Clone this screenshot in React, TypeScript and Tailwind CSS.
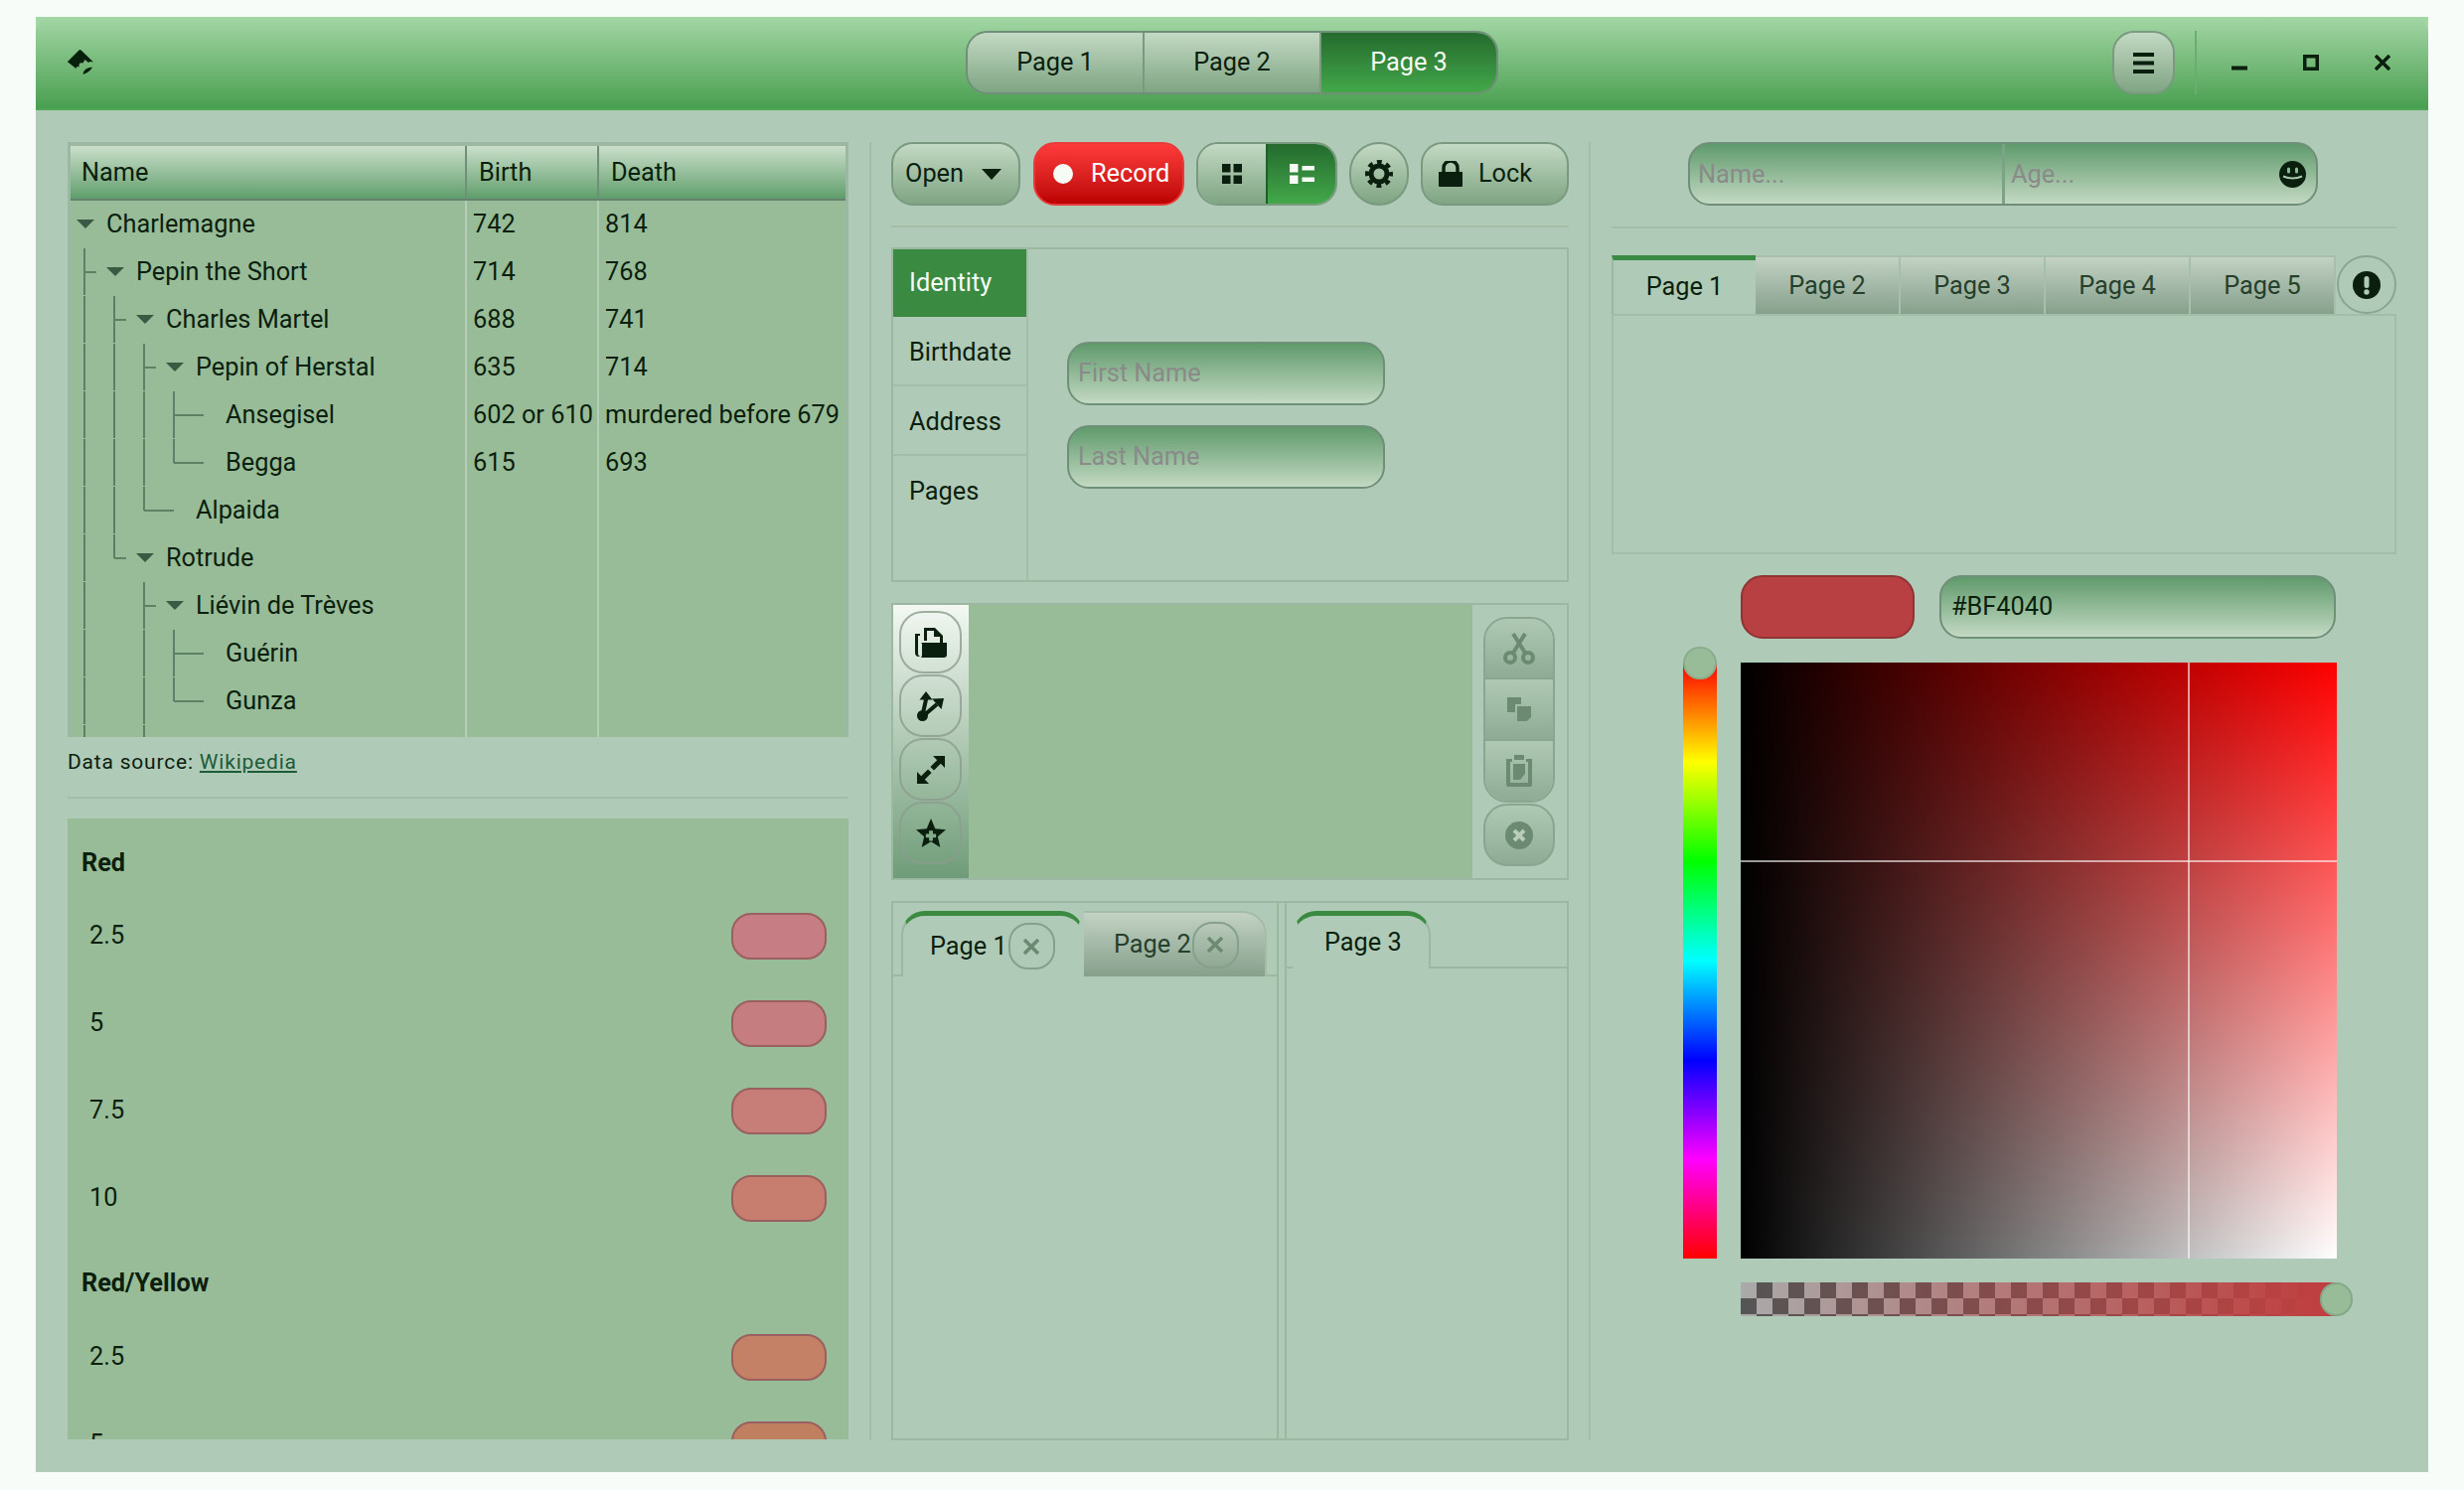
import React from "react";

const INK = "#0b1f0e";

type Guide = "v" | "t" | "l" | "T" | "L" | "_";
const rows: { g: Guide[]; exp?: boolean; name: string; b?: string; d?: string }[] = [
  { g: [], exp: true, name: "Charlemagne", b: "742", d: "814" },
  { g: ["t"], exp: true, name: "Pepin the Short", b: "714", d: "768" },
  { g: ["v", "t"], exp: true, name: "Charles Martel", b: "688", d: "741" },
  { g: ["v", "v", "t"], exp: true, name: "Pepin of Herstal", b: "635", d: "714" },
  { g: ["v", "v", "v", "T"], name: "Ansegisel", b: "602 or 610", d: "murdered before 679" },
  { g: ["v", "v", "v", "L"], name: "Begga", b: "615", d: "693" },
  { g: ["v", "v", "L"], name: "Alpaida" },
  { g: ["v", "l"], exp: true, name: "Rotrude" },
  { g: ["v", "_", "t"], exp: true, name: "Liévin de Trèves" },
  { g: ["v", "_", "v", "T"], name: "Guérin" },
  { g: ["v", "_", "v", "L"], name: "Gunza" },
  { g: ["v", "_", "v"], name: "" },
];

function GuideCell({ k }: { k: Guide }) {
  const c = "#5d8165";
  const long = k === "T" || k === "L";
  const last = k === "l" || k === "L";
  return (
    <svg width="30" height="48" className="shrink-0 overflow-visible">
      {k !== "_" && <rect x="7" y="0" width="2" height={last ? 24 : 47} fill={c} />}
      {k !== "v" && k !== "_" && <rect x="8" y="23" width={long ? 30 : 12} height="2" fill={c} />}
    </svg>
  );
}

function Arrow() {
  return (
    <svg width="30" height="10" viewBox="0 0 30 10" className="shrink-0">
      <path d="M0 0h18l-9 9z" fill="#3b5a44" />
    </svg>
  );
}

function TreeTable() {
  return (
    <div className="flex h-[599px] flex-col border-x-[3px] border-t-[4px] border-b-0 border-[#9db8a2] bg-[#99bc98]">
      <div className="flex h-[55px] shrink-0 border-b-2 border-[#66816c] bg-gradient-to-b from-[#cbdfcb] to-[#5f9e6c]">
        <div className="flex w-[399px] items-center border-r-2 border-[#6f8f78] pl-[11px]">Name</div>
        <div className="flex w-[133px] items-center border-r-2 border-[#6f8f78] pl-[12px]">Birth</div>
        <div className="flex flex-1 items-center pl-[12px]">Death</div>
      </div>
      <div className="flex-1 overflow-hidden">
        {rows.map((r, i) => (
          <div key={i} className="flex h-[48px]">
            <div className="flex w-[399px] shrink-0 items-center border-r-2 border-[#b5ceb8] pl-[6px]">
              {r.g.map((k, j) => (
                <GuideCell key={j} k={k} />
              ))}
              {r.exp ? <Arrow /> : <div className="w-[30px] shrink-0" />}
              <span>{r.name}</span>
            </div>
            <div className="flex w-[133px] shrink-0 items-center whitespace-nowrap border-r-2 border-[#b5ceb8] pl-[6px]">{r.b}</div>
            <div className="flex flex-1 items-center whitespace-nowrap pl-[6px]">{r.d}</div>
          </div>
        ))}
      </div>
    </div>
  );
}

function Swatch({ label, color }: { label: string; color: string }) {
  return (
    <div className="flex h-[88px] shrink-0 items-center justify-between pl-[22px] pr-[22px]">
      <span>{label}</span>
      <div className="h-[47px] w-[96px] rounded-[20px] border-2 border-[#9a5f5f]" style={{ background: color }} />
    </div>
  );
}

function Legend() {
  return (
    <div className="flex h-[625px] flex-col overflow-hidden bg-[#99bc98] pt-[22px]">
      <div className="h-[46px] shrink-0 pl-[14px] font-bold leading-[46px]">Red</div>
      <div className="mt-[6px]">
        <Swatch label="2.5" color="#c67d84" />
        <Swatch label="5" color="#c67d80" />
        <Swatch label="7.5" color="#c77e78" />
        <Swatch label="10" color="#c77e6e" />
      </div>
      <div className="mt-[19px] h-[46px] shrink-0 pl-[14px] font-bold leading-[46px]">Red/Yellow</div>
      <div className="mt-[7px]">
        <Swatch label="2.5" color="#c58165" />
        <Swatch label="5" color="#c08060" />
      </div>
    </div>
  );
}

const btn = "flex h-[64px] items-center border-2 border-[#7a9a80] bg-gradient-to-b from-[#c3d9c3] to-[#7fa583]";

function ToolbarRow() {
  return (
    <div className="flex h-[64px]">
      <div className={`${btn} w-[130px] rounded-[22px] pl-[12px]`}>
        <span>Open</span>
        <svg width="20" height="11" viewBox="0 0 20 11" className="ml-[18px]">
          <path d="M0 0h20l-10 11z" fill={INK} />
        </svg>
      </div>
      <div className="ml-[13px] flex h-[64px] w-[152px] items-center rounded-[22px] border-2 border-[#e93a3a] bg-gradient-to-b from-[#ff3a3a] to-[#bb0000] pl-[18px] text-white">
        <div className="h-[20px] w-[20px] rounded-full bg-[#f6fbf6]" />
        <span className="ml-[18px]">Record</span>
      </div>
      <div className="ml-[12px] flex h-[64px] w-[142px] overflow-hidden rounded-[22px] border-2 border-[#7a9a80]">
        <div className="flex w-[68px] items-center justify-center bg-gradient-to-b from-[#c3d9c3] to-[#7fa583]">
          <svg width="20" height="20" viewBox="0 0 20 20" fill={INK}>
            <rect width="8.5" height="8.5" />
            <rect x="11.5" width="8.5" height="8.5" />
            <rect y="11.5" width="8.5" height="8.5" />
            <rect x="11.5" y="11.5" width="8.5" height="8.5" />
          </svg>
        </div>
        <div className="flex flex-1 items-center justify-center border-l-2 border-[#1f5f28] bg-gradient-to-b from-[#256b2e] to-[#43a84a]">
          <svg width="25" height="20" viewBox="0 0 25 20" fill="#f6fbf6">
            <rect width="8.5" height="8.5" />
            <rect x="12.5" y="2" width="12.5" height="4.5" />
            <rect y="11.5" width="8.5" height="8.5" />
            <rect x="12.5" y="13.5" width="12.5" height="4.5" />
          </svg>
        </div>
      </div>
      <div className={`${btn} ml-[12px] w-[60px] justify-center rounded-full`}>
        <svg width="28" height="28" viewBox="0 0 28 28" fill="none" stroke={INK}>
          <circle cx="14" cy="14" r="8" strokeWidth="5" />
          <circle cx="14" cy="14" r="12" strokeWidth="4" strokeDasharray="4.9 4.52" strokeDashoffset="2.45" />
        </svg>
      </div>
      <div className={`${btn} ml-[12px] w-[149px] rounded-[22px] pl-[16px]`}>
        <svg width="24" height="26" viewBox="0 0 24 26" fill={INK}>
          <path d="M0 11h24v14a1 1 0 0 1-1 1H1a1 1 0 0 1-1-1z" />
          <path d="M5 12V7a7 7 0 0 1 14 0v5" fill="none" stroke={INK} strokeWidth="3.4" />
        </svg>
        <span className="ml-[16px]">Lock</span>
      </div>
    </div>
  );
}

const inputCls =
  "flex h-[64px] items-center border-2 border-[#6f8f78] bg-gradient-to-b from-[#5f9a6c] to-[#c3d9c3]";

function SidePanel() {
  const items = ["Birthdate", "Address"];
  return (
    <div className="mt-[20px] flex h-[337px] border-2 border-[#9db8a2]">
      <div className="flex w-[136px] shrink-0 flex-col border-r-2 border-[#a3bda8]">
        <div className="flex h-[68px] items-center bg-[#3a8a42] pl-[16px] text-[#f6fbf6]">Identity</div>
        {items.map((t) => (
          <div key={t} className="flex h-[70px] items-center border-b-2 border-[#a3bda8] pl-[16px] pt-[4px]">
            {t}
          </div>
        ))}
        <div className="flex h-[70px] items-center pl-[16px] pt-[2px]">Pages</div>
      </div>
      <div className="flex flex-1 flex-col justify-center gap-[20px] pl-[39px]">
        <div className={`${inputCls} w-[320px] rounded-[22px] pl-[9px] text-[#8a8a8a]`}>First Name</div>
        <div className={`${inputCls} w-[320px] rounded-[22px] pl-[9px] text-[#8a8a8a]`}>Last Name</div>
      </div>
    </div>
  );
}

const toolBtn = "flex h-[63px] w-[63px] items-center justify-center rounded-[24px] border-2 border-[#8c9c8f]/80";

function Toolbars() {
  const dis = "#6c8a72";
  return (
    <div className="mt-[21px] flex h-[279px] border-2 border-[#9db8a2]">
      <div className="flex w-[76px] shrink-0 flex-col gap-[1px] bg-gradient-to-b from-[#f3f8f3] to-[#6f9c78] pl-[6px] pt-[6px]">
        <div className={toolBtn}>
          <svg width="32" height="30" viewBox="0 0 32 30" fill={INK}>
            <path d="M9 0h11l8 8v8h-3V9h-6V3H12v10H9z" />
            <path d="M0 6h5v2H3v18q0 2 2 3H4q-4 0-4-4z" />
            <path d="M6 15h26v12q0 3-3 3H6q1-1 1-3V16z" />
          </svg>
        </div>
        <div className={toolBtn}>
          <svg width="27" height="30" viewBox="0 0 27 30" fill={INK}>
            <circle cx="5.500" cy="24.500" r="5.500" />
            <path d="M5.500 24 9.500 6" stroke={INK} strokeWidth="4" />
            <path d="M9 0 2.500 8.500h13z" />
            <path d="M6 25 20 13" stroke={INK} strokeWidth="4" />
            <path d="M27 7 15 7.500 24.500 18z" />
          </svg>
        </div>
        <div className={toolBtn}>
          <svg width="28" height="28" viewBox="0 0 28 28" fill={INK}>
            <path d="M16 0h12v12l-4.2-4.2-6.8 6.8-3.6-3.6 6.8-6.8z" />
            <path d="M0 28V16l4.2 4.2 6.8-6.8 3.6 3.6-6.8 6.8L12 28z" />
          </svg>
        </div>
        <div className={toolBtn}>
          <svg width="30" height="30" viewBox="0 0 28 28" fill={INK} fillRule="evenodd">
            <path d="M14 0l4 9.500 10 .9-7.600 6.600 2.300 10.100L14 21.700 5.300 27.100 7.600 17 0 10.400l10-.9zM12.200 11.500v3h-3V18h3v3h3.600v-3h3v-3.500h-3v-3z" />
          </svg>
        </div>
      </div>
      <div className="flex-1 bg-[#99bc98]" />
      <div className="flex w-[95px] shrink-0 flex-col pl-[11px] pt-[12px]">
        <div className="w-[72px] overflow-hidden rounded-[24px] border-2 border-[#8aa590]">
          <div className="flex h-[61px] items-center justify-center border-b-2 border-[#8aa590] bg-gradient-to-b from-[#aec8b4] to-[#8fab95]">
            <svg width="32" height="32" viewBox="0 0 32 32" fill="none" stroke={dis} strokeWidth="4">
              <circle cx="7" cy="25" r="5" />
              <circle cx="25" cy="25" r="5" />
              <path d="M9.500 21 22 1M22.500 21 10 1" />
            </svg>
          </div>
          <div className="flex h-[62px] items-center justify-center border-b-2 border-[#8aa590] bg-gradient-to-b from-[#aec8b4] to-[#8fab95]">
            <svg width="24" height="24" viewBox="0 0 24 24" fill={dis}>
              <path d="M0 0h14v7H8v8H0z" />
              <path d="M10 9h14v11l-4 4H10z" />
            </svg>
          </div>
          <div className="flex h-[60px] items-center justify-center bg-gradient-to-b from-[#aec8b4] to-[#8fab95]">
            <svg width="26" height="32" viewBox="0 0 26 32" fill={dis}>
              <path d="M8 0h10v5H8z" />
              <path fillRule="evenodd" d="M0 4h6v3H4v21h18V7h-2V4h6v26a2 2 0 0 1-2 2H2a2 2 0 0 1-2-2z" />
              <path d="M7 9h12v10l-5 6H7z" />
            </svg>
          </div>
        </div>
        <div className="mt-[1px] flex h-[63px] w-[72px] items-center justify-center rounded-[24px] border-2 border-[#8aa590] bg-gradient-to-b from-[#aec8b4] to-[#8fab95]">
          <svg width="28" height="28" viewBox="0 0 28 28">
            <circle cx="14" cy="14" r="14" fill={dis} />
            <path d="M9 9l10 10M19 9 9 19" stroke="#b5cdb9" strokeWidth="4" />
          </svg>
        </div>
      </div>
    </div>
  );
}

function CloseBtn() {
  return (
    <div className="flex h-[47px] w-[47px] shrink-0 items-center justify-center rounded-[20px] border-2 border-[#85a08b]">
      <svg width="16" height="16" viewBox="0 0 16 16" stroke="#6c8a72" strokeWidth="3.600">
        <path d="M1 1l14 14M15 1 1 15" />
      </svg>
    </div>
  );
}

function SplitTabs() {
  return (
    <div className="mt-[21px] flex flex-1 border-2 border-[#9db8a2]">
      <div className="flex h-[74px] w-[386px] shrink-0 items-end">
        <div className="h-[2px] w-[8px] bg-[#9db8a2]" />
        <div className="flex h-[66px] w-[184px] items-center rounded-t-[24px] border-x-2 border-t-[5px] border-x-[#9db8a2] border-r-transparent border-t-[#3a8a42] pl-[27px]">
          <span>Page 1</span>
          <span className="ml-[1px]">
            <CloseBtn />
          </span>
        </div>
        <div className="flex h-[66px] w-[184px] items-center rounded-tr-[24px] border-t-2 border-r-2 border-[#a3bda8] bg-gradient-to-b from-[#c3d2c3] to-[#86a08c] pl-[30px] text-[#26402c]">
          <span>Page 2</span>
          <span className="ml-[1px]">
            <CloseBtn />
          </span>
        </div>
        <div className="h-[2px] flex-1 bg-[#9db8a2]" />
      </div>
      <div className="w-[2px] shrink-0 bg-[#9ab99c]" />
      <div className="w-[6px] shrink-0" />
      <div className="w-[2px] shrink-0 bg-[#9ab99c]" />
      <div className="flex h-[66px] flex-1 items-end">
        <div className="h-[2px] w-[6px] bg-[#9db8a2]" />
        <div className="flex h-[58px] w-[139px] items-center rounded-t-[24px] border-x-2 border-t-[5px] border-x-[#9db8a2] border-l-transparent border-t-[#3a8a42] pl-[30px]">
          Page 3
        </div>
        <div className="h-[2px] flex-1 bg-[#9db8a2]" />
      </div>
    </div>
  );
}

function TabsPanel() {
  const pages = ["Page 2", "Page 3", "Page 4", "Page 5"];
  return (
    <div className="mt-[27px]">
      <div className="flex h-[59px]">
        <div className="flex w-[145px] items-center justify-center border-l-2 border-t-[5px] border-l-[#9db8a2] border-t-[#3a8a42] pb-[1px]">Page 1</div>
        {pages.map((p) => (
          <div key={p} className="flex w-[146px] items-center justify-center border-r-2 border-t-2 border-[#a8bfae] bg-gradient-to-b from-[#c3d2c3] to-[#86a08c] text-[#26402c]">
            {p}
          </div>
        ))}
        <div className="ml-[1px] flex h-[59px] flex-1 items-center justify-center rounded-full border-2 border-[#8aa590]">
          <svg width="28" height="28" viewBox="0 0 28 28">
            <circle cx="14" cy="14" r="14" fill={INK} />
            <rect x="11.500" y="5" width="5" height="12" rx="2.500" fill="#b0cab8" />
            <circle cx="14" cy="21" r="2.700" fill="#b0cab8" />
          </svg>
        </div>
      </div>
      <div className="h-[242px] border-2 border-t-2 border-[#a3bda8]" />
    </div>
  );
}

function ColorPicker() {
  return (
    <div>
      <div className="mt-[21px] flex gap-[25px] pl-[130px]">
        <div className="h-[64px] w-[175px] rounded-[22px] border-2 border-[#8f3333] bg-[#b83f42]" />
        <div className={`${inputCls} w-[399px] rounded-[22px] pl-[10px]`}>#BF4040</div>
      </div>
      <div className="mt-[24px] flex gap-[24px] pl-[72px]">
        <div className="relative h-[600px] w-[34px] bg-[linear-gradient(to_bottom,#f00,#ff0_16.66%,#0f0_33.33%,#0ff_50%,#00f_66.66%,#f0f_83.33%,#f00)]">
          <div className="absolute -top-[16px] left-0 h-[33px] w-[34px] rounded-full border-2 border-[#8aae8c] bg-[#99bc98]" />
        </div>
        <div className="relative h-[600px] w-[600px] bg-[linear-gradient(to_right,#000,transparent),linear-gradient(to_bottom,#f00,#fff)]">
          <div className="absolute inset-y-0 left-[450px] w-[2px] bg-white/60" />
          <div className="absolute inset-x-0 top-[199px] h-[2px] bg-white/60" />
        </div>
      </div>
      <div className="relative ml-[130px] mt-[24px] h-[34px] w-[600px] bg-[linear-gradient(to_right,rgba(191,64,64,0),#bf4040_96%),conic-gradient(#555_25%,#aaa_0_50%,#555_0_75%,#aaa_0)] [background-size:100%_100%,32px_32px]">
        <div className="absolute -right-[16px] top-0 h-[34px] w-[33px] rounded-full border-2 border-[#84a888] bg-[#99bc98]" />
      </div>
    </div>
  );
}

function Header() {
  const labels = ["Page 1", "Page 2"];
  return (
    <div className="h-[94px] shrink-0 bg-[#a3d6a5]">
      <div className="grid h-[94px] grid-cols-[1fr_536px_1fr] items-center rounded-t-[16px] border-b-2 border-[#4ca652] bg-gradient-to-b from-[#a3d6a5] to-[#489f50]">
        <div className="pl-[32px]">
          <svg width="26" height="26" viewBox="0 0 26 26" fill="#07200c">
            <path d="M13 0 26 12.500Q22 11.500 21 13L17.500 10 15.500 13.500Q11 12 11.500 17.500 9 16 8.500 19L1 13Q0 13 0 12L11 1Q12 0 13 0Z" />
            <path d="M15.500 25Q16 18 25 17.500 23 22 15.500 25Z" />
          </svg>
        </div>
        <div className="flex h-[64px] overflow-hidden rounded-[22px] border-2 border-[#6f8f78]">
          {labels.map((l) => (
            <div key={l} className="flex w-[178px] items-center justify-center border-r-2 border-[#7a9a80] bg-gradient-to-b from-[#c3d9c3] to-[#7fa583]">
              {l}
            </div>
          ))}
          <div className="flex flex-1 items-center justify-center bg-gradient-to-b from-[#256b2e] to-[#43a84a] text-[#f6fbf6]">Page 3</div>
        </div>
        <div className="flex items-center justify-end pr-[10px]">
          <div className="flex h-[64px] w-[63px] items-center justify-center rounded-[22px] border-2 border-[#7a9a80] bg-gradient-to-b from-[#c3d9c3] to-[#7fa583]">
            <svg width="21" height="21" viewBox="0 0 21 21" fill={INK}>
              <rect width="21" height="4" />
              <rect y="8.500" width="21" height="4" />
              <rect y="17" width="21" height="4" />
            </svg>
          </div>
          <div className="ml-[20px] h-[64px] w-[2px] bg-[#69ad70]" />
          <div className="ml-[7px] flex h-[64px] w-[72px] items-center justify-center">
            <svg width="16" height="16" viewBox="0 0 16 16" fill={INK}>
              <rect y="11.500" width="16" height="4" />
            </svg>
          </div>
          <div className="flex h-[64px] w-[72px] items-center justify-center">
            <svg width="16" height="16" viewBox="0 0 16 16" fill="none" stroke={INK} strokeWidth="3.500">
              <rect x="1.750" y="1.750" width="12.500" height="12.500" />
            </svg>
          </div>
          <div className="flex h-[64px] w-[72px] items-center justify-center">
            <svg width="16" height="16" viewBox="0 0 16 16" stroke={INK} strokeWidth="3.500">
              <path d="M1 1l14 14M15 1 1 15" />
            </svg>
          </div>
        </div>
      </div>
    </div>
  );
}

export default function App() {
  return (
    <div className="h-[1500px] w-[2480px] bg-[#f7fcf8] pl-[36px] pt-[17px] font-[Roboto,sans-serif] text-[25.3px] leading-none text-[#0b1f0e]">
      <div className="flex h-[1465px] w-[2408px] flex-col bg-[#b0cab8]">
        <Header />
        <div className="flex flex-1 pt-[32px]">
          <div className="ml-[32px] flex h-[1307px] w-[786px] shrink-0 flex-col">
            <TreeTable />
            <div className="flex h-[62px] items-center border-b-2 border-[#a3bda8] pb-[10px] text-[21px] tracking-[0.8px]">
              Data source:&nbsp;<a className="text-[#1c5c38] underline">Wikipedia</a>
            </div>
            <div className="h-[20px]" />
            <Legend />
          </div>
          <div className="ml-[21px] h-[1307px] w-[2px] shrink-0 bg-[#a3bda8]" />
          <div className="ml-[20px] flex h-[1307px] w-[682px] shrink-0 flex-col">
            <ToolbarRow />
            <div className="mt-[20px] h-[2px] bg-[#a3bda8]" />
            <SidePanel />
            <Toolbars />
            <SplitTabs />
          </div>
          <div className="ml-[20px] h-[1307px] w-[2px] shrink-0 bg-[#a3bda8]" />
          <div className="ml-[21px] flex h-[1307px] w-[790px] shrink-0 flex-col">
            <div className="relative ml-[77px] flex h-[64px] w-[634px] overflow-hidden rounded-[22px] border-2 border-[#6f8f78] bg-gradient-to-b from-[#5f9a6c] to-[#c3d9c3] text-[#8a8a8a]">
              <div className="flex w-[317px] items-center border-r-[3px] border-[#7da386] pl-[8px] pt-[1px]">Name...</div>
              <div className="flex flex-1 items-center pl-[6px] pt-[1px]">Age...</div>
              <svg width="27" height="27" viewBox="0 0 27 27" className="absolute right-[10px] top-[17px]">
                <circle cx="13.500" cy="13.500" r="13.500" fill={INK} />
                <rect x="8" y="6.500" width="3" height="6" rx="1.500" fill="#8fb796" />
                <rect x="16" y="6.500" width="3" height="6" rx="1.500" fill="#8fb796" />
                <path d="M4 15.500q9.500 4 19 0" fill="none" stroke="#a9c9ad" strokeWidth="2.200" />
              </svg>
            </div>
            <div className="mt-[21px] h-[2px] bg-[#a3bda8]" />
            <TabsPanel />
            <ColorPicker />
          </div>
        </div>
      </div>
    </div>
  );
}
